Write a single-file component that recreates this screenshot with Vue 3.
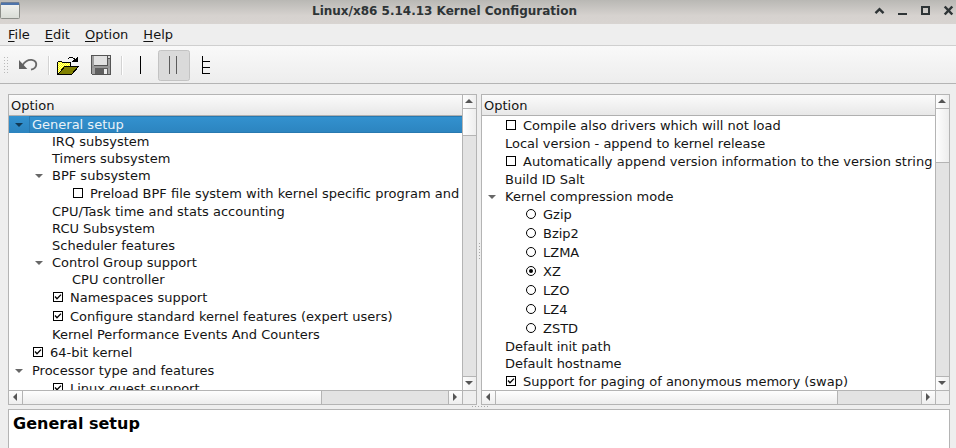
<script setup>
const left = [
  { t: 'General setup', x: 23, arrow: true, sel: true },
  { t: 'IRQ subsystem', x: 43 },
  { t: 'Timers subsystem', x: 43 },
  { t: 'BPF subsystem', x: 43, arrow: true },
  { t: 'Preload BPF file system with kernel specific program and', x: 63, box: 'check' },
  { t: 'CPU/Task time and stats accounting', x: 43 },
  { t: 'RCU Subsystem', x: 43 },
  { t: 'Scheduler features', x: 43 },
  { t: 'Control Group support', x: 43, arrow: true },
  { t: 'CPU controller', x: 63 },
  { t: 'Namespaces support', x: 43, box: 'check', on: true },
  { t: 'Configure standard kernel features (expert users)', x: 43, box: 'check', on: true },
  { t: 'Kernel Performance Events And Counters', x: 43 },
  { t: '64-bit kernel', x: 23, box: 'check', on: true },
  { t: 'Processor type and features', x: 23, arrow: true },
  { t: 'Linux guest support', x: 43, box: 'check', on: true },
]
const right = [
  { t: 'Compile also drivers which will not load', x: 23, box: 'check' },
  { t: 'Local version - append to kernel release', x: 23 },
  { t: 'Automatically append version information to the version string', x: 23, box: 'check' },
  { t: 'Build ID Salt', x: 23 },
  { t: 'Kernel compression mode', x: 23, arrow: true },
  { t: 'Gzip', x: 43, box: 'radio' },
  { t: 'Bzip2', x: 43, box: 'radio' },
  { t: 'LZMA', x: 43, box: 'radio' },
  { t: 'XZ', x: 43, box: 'radio', on: true },
  { t: 'LZO', x: 43, box: 'radio' },
  { t: 'LZ4', x: 43, box: 'radio' },
  { t: 'ZSTD', x: 43, box: 'radio' },
  { t: 'Default init path', x: 23 },
  { t: 'Default hostname', x: 23 },
  { t: 'Support for paging of anonymous memory (swap)', x: 23, box: 'check', on: true },
]
const panes = [
  { id: 'left', rows: left, hThumb: 298, vThumb: 26 },
  { id: 'right', rows: right, hThumb: 341, vThumb: 53 },
]
const menus = ['File', 'Edit', 'Option', 'Help']
</script>

<template>
  <div class="window">
    <header class="titlebar">
      <svg class="appicon" width="21" height="20" viewBox="0 0 21 20">
        <defs><linearGradient id="ai" x1="0" y1="0" x2="0" y2="1"><stop offset="0" stop-color="#f4f5f2" /><stop offset="1" stop-color="#d9dcd6" /></linearGradient></defs>
        <rect x="0.5" y="2.5" width="19" height="16" rx="1" fill="url(#ai)" stroke="#8c8e89" />
        <path d="M1 3h18v2H1z" fill="#4d74ab" />
        <path d="M1 2.5h18" stroke="#6e7f96" />
      </svg>
      <h1>Linux/x86 5.14.13 Kernel Configuration</h1>
      <svg class="winbtns" width="82" height="24" viewBox="0 0 82 24" fill="none" stroke="#2e3436">
        <path d="M1.500 13.200L5.500 9.200L9.500 13.200" stroke-width="2.4" />
        <path d="M24 14h9" stroke-width="2" />
        <path d="M48 7h7v7h-7z" stroke-width="2" />
        <path d="M70.700 6.500l7.600 8M78.300 6.500l-7.600 8" stroke-width="2.5" />
      </svg>
    </header>

    <nav class="menubar">
      <span v-for="m in menus" :key="m"><u>{{ m[0] }}</u>{{ m.slice(1) }}</span>
    </nav>

    <div class="toolbar">
      <svg width="240" height="37" viewBox="0 46 240 37" shape-rendering="crispEdges">
        <defs>
          <pattern id="grip" x="4" y="57" width="3" height="3" patternUnits="userSpaceOnUse"><rect width="1" height="1" fill="#b9b9b9" /></pattern>
          <pattern id="dither" width="2" height="2" patternUnits="userSpaceOnUse"><rect width="2" height="2" fill="#ff0" /><path d="M0 0h1v1H0zM1 1h1v1H1z" fill="#ffff9c" /></pattern>
        </defs>
        <rect x="4" y="57" width="4" height="16" fill="url(#grip)" />
        <g shape-rendering="auto">
          <path d="M22.500 65.200C25 61.300 28.500 59.600 31.700 59.900C35 60.300 36.600 62.500 36.200 65C35.900 67.600 34 69 31 69.600" fill="none" stroke="#696969" stroke-width="1.9" />
          <path d="M19 60v9h8.300z" fill="#606060" />
        </g>
        <path d="M48.500 56v19M121.500 56v19" stroke="#d3d3d3" />
        <path d="M49.500 56v19M122.500 56v19" stroke="#fff" />
        <path d="M57.500 74.500v-12l1-1h3l1 1h8v4h-6l-6 8z" fill="url(#dither)" stroke="#000" />
        <path d="M58 74.500l6.500-8h14l-7 8z" fill="#808000" stroke="#000" />
        <path d="M68 58h1v-1h4v1h2v1h-2v-1h-4v1h-1zM77 57h1v5h-6v-1h1v-1h1v-1h2v-1h1z" fill="#000" />
        <g>
          <path d="M91 55h20v20H92l-1-1z" fill="#555" />
          <path d="M92 56h2v10h14v-7h2v15h-2v-7H94v7h-2z" fill="#a0a0a0" />
          <path d="M94 56h13v9H94z" fill="#e1e1e1" />
          <path d="M108 56h2v2h-2z" fill="#ddd" />
          <path d="M92 66h18v2H92z" fill="#979797" />
          <path d="M92 68h3v6h-3z" fill="#a0a0a0" />
          <path d="M95 68h13v6H95z" fill="#606060" />
          <path d="M104 69h3v5h-3z" fill="#eee" />
        </g>
        <rect x="158.500" y="50.500" width="31" height="30" rx="2" fill="#dadada" stroke="#c3c3c3" shape-rendering="auto" />
        <path d="M140.500 56v18" stroke="#000" />
        <path d="M169.500 56v18M176.500 56v18" stroke="#5b5b5b" />
        <path d="M202.500 56v18M202 61.500h8M202 67.500h8M202 73.500h8" stroke="#000" />
      </svg>
    </div>

    <main class="panes">
      <template v-for="(p, i) in panes" :key="p.id">
        <div v-if="i" class="vgrip"><i v-for="n in 6" :key="n"></i></div>
        <section class="pane">
          <div class="view">
            <div class="head">Option</div>
            <div class="rows">
              <div v-for="r in p.rows" :key="r.t" class="row" :class="{ tall: r.box, sel: r.sel }" :style="{ paddingLeft: r.x + 'px' }">
                <svg v-if="r.arrow" class="tri" width="8" height="4"><path d="M0 0h8L4 4z" /></svg>
                <svg v-if="r.box === 'check'" class="box" width="10" height="10" viewBox="0 0 10 10">
                  <rect x=".5" y=".5" width="9" height="9" fill="#fff" stroke="#000" />
                  <path v-if="r.on" d="M2 4.500L4 6.800L8 2.600" fill="none" stroke="#000" stroke-width="1.3" />
                </svg>
                <svg v-if="r.box === 'radio'" class="box" width="10" height="10" viewBox="0 0 10 10">
                  <circle cx="5" cy="5" r="4.500" fill="#fff" stroke="#000" />
                  <circle v-if="r.on" cx="5" cy="5" r="2" />
                </svg>
                <span>{{ r.t }}</span>
              </div>
            </div>
          </div>
          <div class="vbar">
            <div class="btn"><svg width="8" height="4"><path d="M0 4h8L4 0z" /></svg></div>
            <div class="thumb" :style="{ height: p.vThumb + 'px' }"></div>
            <div class="track"></div>
            <div class="btn"><svg width="8" height="4"><path d="M0 0h8L4 4z" /></svg></div>
          </div>
          <div class="hbar">
            <div class="btn"><svg width="4" height="8"><path d="M4 0v8L0 4z" /></svg></div>
            <div class="thumb" :style="{ width: p.hThumb + 'px' }"></div>
            <div class="track"></div>
            <div class="btn"><svg width="4" height="8"><path d="M0 0v8L4 4z" /></svg></div>
          </div>
          <div class="corner"></div>
        </section>
      </template>
    </main>

    <div class="hgrip"><i v-for="n in 6" :key="n"></i></div>
    <section class="help"><h2>General setup</h2></section>
  </div>
</template>

<style>
body { margin: 0; overflow: hidden; }
</style>

<style scoped>
.window { width: 956px; height: 448px; overflow: hidden; background: #eee; color: #141414; font: 13px/17px "DejaVu Sans", sans-serif; display: flex; flex-direction: column; }
.window * { box-sizing: border-box; }
svg { display: block; flex: none; }
.titlebar { height: 24px; flex: none; background: linear-gradient(#b9b8b4, #d6d2cf 65%, #d8d4d1); display: grid; grid-template-columns: 82px 1fr 82px; }
h1 { margin: 0; padding-right: 67px; font-size: 12px; line-height: 22px; font-weight: bold; color: #2e3436; text-align: center; white-space: nowrap; }
.menubar { height: 22px; flex: none; border-bottom: 1px solid #cfcfcf; display: flex; gap: 15px; padding: 2px 8px 0; line-height: 18px; }
.menubar u { text-underline-offset: 2px; }
.toolbar { height: 38px; flex: none; background: linear-gradient(#f9f9f9, #ededed); border-bottom: 1px solid #b4b4b4; }
.panes { height: 311px; flex: none; margin: 10px 6px 0 8px; display: grid; grid-template-columns: 469px 4px 469px; }
.pane { border: 1px solid #b4b4b4; display: grid; grid-template-columns: 453px 14px; grid-template-rows: 295px 14px; background: #fff; min-width: 0; }
.view { overflow: hidden; min-width: 0; }
.head { height: 21px; padding-left: 2px; line-height: 21px; background: linear-gradient(#fbfbfb, #e8e8e8); border-bottom: 1px solid #b0b0b0; }
.row { height: 17px; display: flex; align-items: flex-start; white-space: nowrap; position: relative; }
.tall { height: 19px; line-height: 19px; }
.sel { color: #e9f2f8; background: linear-gradient(#3392d0, #2c84bf); }
.sel::before { content: ""; position: absolute; inset: 0 0 0 20px; border: solid #2879b0; border-width: 1px 0 1px 1px; }
.tri { position: absolute; top: 7px; margin-left: -17px; fill: #676767; }
.sel .tri { fill: #123a55; }
.box { margin: 4px 7px 0 1px; }
.vbar { border-left: 1px solid #b4b4b4; display: flex; flex-direction: column; }
.vbar .btn { height: 14px; flex: none; border-bottom: 1px solid #b4b4b4; padding: 4px 0 0 2px; background: linear-gradient(90deg, #fdfdfd, #eee); }
.vbar .btn:last-child { border-bottom: 0; border-top: 1px solid #b4b4b4; }
.btn svg { fill: #555; }
.vbar .thumb { flex: none; background: linear-gradient(90deg, #fefefe, #ededed); border-bottom: 1px solid #b4b4b4; box-sizing: content-box; }
.track { flex: 1; background: #e3e3e3; }
.hbar { border-top: 1px solid #b4b4b4; display: flex; }
.hbar .btn { width: 14px; flex: none; border-right: 1px solid #b4b4b4; padding: 2px 0 0 4px; background: linear-gradient(#fdfdfd, #eee); }
.hbar .btn:last-child { border-right: 0; border-left: 1px solid #b4b4b4; }
.hbar .thumb { flex: none; background: linear-gradient(#fefefe, #ededed); border-right: 1px solid #b4b4b4; box-sizing: content-box; }
.corner { border-left: 1px solid #b4b4b4; border-top: 1px solid #b4b4b4; background: #eee; }
i { width: 1px; height: 1px; background: #a8a8a8; }
.vgrip { display: flex; flex-direction: column; gap: 2px; padding: 149px 0 0 2px; }
.hgrip { height: 4px; flex: none; display: flex; gap: 2px; padding: 1px 0 0 472px; }
.help { height: 60px; flex: none; margin: 0 6px 0 8px; background: #fff; border: 1px solid #b4b4b4; padding: 3px 4px; }
h2 { margin: 0; font-size: 16px; line-height: 22px; color: #000; }
</style>
